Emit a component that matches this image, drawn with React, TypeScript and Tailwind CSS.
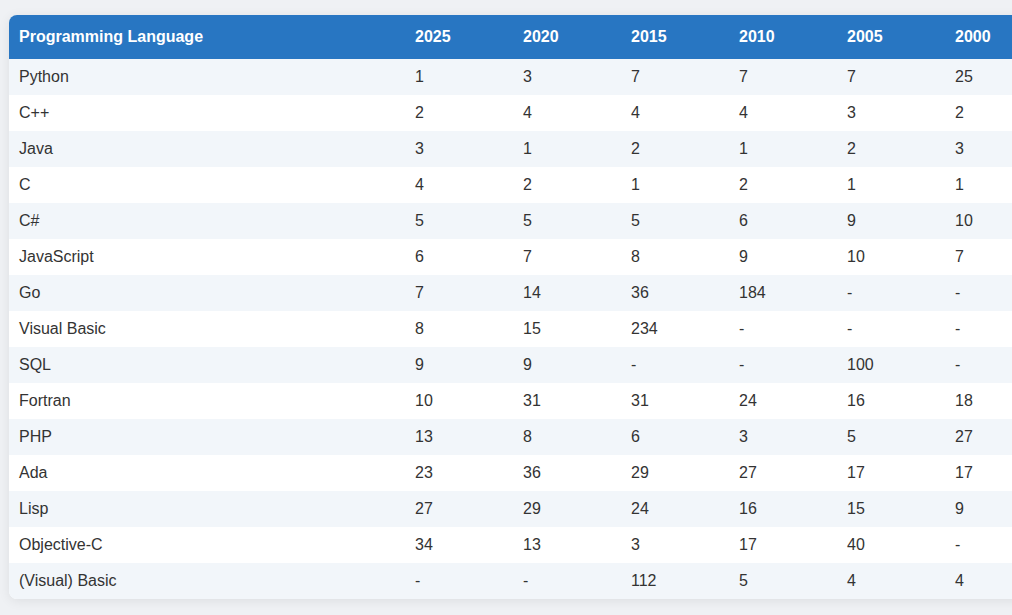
const years = ["2025", "2020", "2015", "2010", "2005", "2000"];

const rows: [string, string[]][] = [
  ["Python", ["1", "3", "7", "7", "7", "25"]],
  ["C++", ["2", "4", "4", "4", "3", "2"]],
  ["Java", ["3", "1", "2", "1", "2", "3"]],
  ["C", ["4", "2", "1", "2", "1", "1"]],
  ["C#", ["5", "5", "5", "6", "9", "10"]],
  ["JavaScript", ["6", "7", "8", "9", "10", "7"]],
  ["Go", ["7", "14", "36", "184", "-", "-"]],
  ["Visual Basic", ["8", "15", "234", "-", "-", "-"]],
  ["SQL", ["9", "9", "-", "-", "100", "-"]],
  ["Fortran", ["10", "31", "31", "24", "16", "18"]],
  ["PHP", ["13", "8", "6", "3", "5", "27"]],
  ["Ada", ["23", "36", "29", "27", "17", "17"]],
  ["Lisp", ["27", "29", "24", "16", "15", "9"]],
  ["Objective-C", ["34", "13", "3", "17", "40", "-"]],
  ["(Visual) Basic", ["-", "-", "112", "5", "4", "4"]],
];

export default function App() {
  return (
    <div
      className="w-[1012px] h-[615px] overflow-hidden bg-[#eff1f4] pt-[15px] pl-[9px]"
      style={{ fontFamily: '"Liberation Sans", Arial, sans-serif' }}
    >
      <div className="w-[1044px] rounded-lg overflow-hidden bg-white shadow-[0_2px_12px_rgba(0,0,0,0.08)]">
        <table className="w-full border-collapse table-fixed text-[16px] leading-5">
          <colgroup>
            <col className="w-[396px]" />
            {years.map(y => (
              <col key={y} className="w-[108px]" />
            ))}
          </colgroup>
          <thead className="bg-[#2876c2] text-white">
            <tr>
              <th className="px-[10px] py-3 text-left font-bold">Programming Language</th>
              {years.map(y => (
                <th key={y} className="px-[10px] py-3 text-left font-bold">{y}</th>
              ))}
            </tr>
          </thead>
          <tbody className="text-[#333333]">
            {rows.map(([name, vals], i) => (
              <tr key={name} className={i % 2 === 0 ? "bg-[#f2f6fa]" : "bg-white"}>
                <td className="px-[10px] py-2">{name}</td>
                {vals.map((v, j) => (
                  <td key={j} className="px-[10px] py-2">{v}</td>
                ))}
              </tr>
            ))}
          </tbody>
        </table>
      </div>
    </div>
  );
}
